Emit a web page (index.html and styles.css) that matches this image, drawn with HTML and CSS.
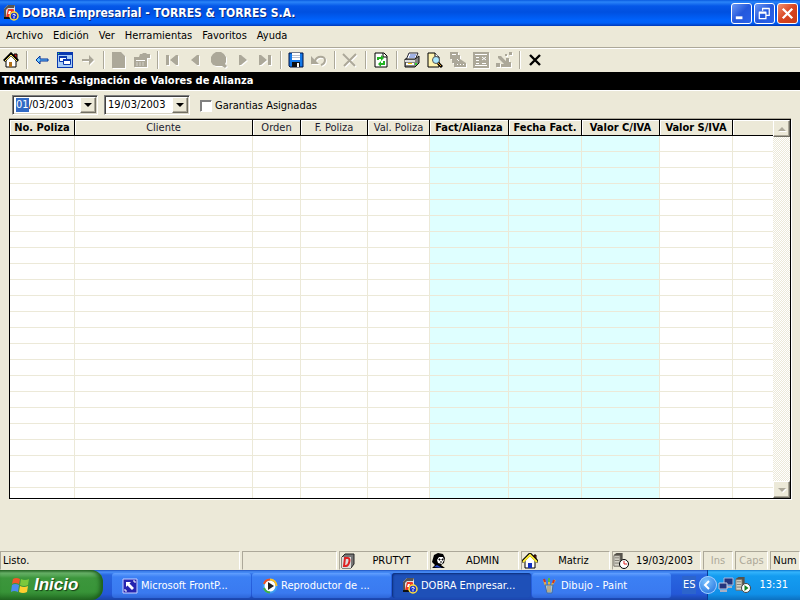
FILE: index.html
```html
<!DOCTYPE html>
<html lang="es">
<head>
<meta charset="utf-8">
<title>DOBRA Empresarial - TORRES &amp; TORRES S.A.</title>
<link rel="stylesheet" href="styles.css">
</head>
<body>
<svg class="defs" aria-hidden="true">
  <symbol id="dobra" viewBox="0 0 16 16">
    <path d="M1 4l4-4h7v9l-4 5H1z" fill="#e4e4e4"/><path d="M1 4l4-4h7l-1 3H5L3 5v8H1z" fill="#555"/><path d="M1 12h7v2H1z" fill="#111"/>
    <path d="M5 4h5c2 0 1 4 0 5l-4 3H3z" fill="#f03828"/><path d="M6 6h2L7 9H5z" fill="#fff"/>
    <circle cx="11" cy="11" r="4" fill="#1830c8" stroke="#ffe03a" stroke-width="1.500"/><path d="M9.500 10q1.500-2 3 0L11 11.500v2" fill="none" stroke="#fff"/>
  </symbol>
  <symbol id="house" viewBox="0 0 16 16">
    <path d="M11 2h3v5h-3z" fill="#c22" stroke="#000"/><path d="M3 8l5-5 5 5v7H3z" fill="#fff" stroke="#000"/>
    <path d="M1 9l7-7 7 7" fill="none" stroke="#000" stroke-width="3"/><path d="M2 9l6-6 6 6" fill="none" stroke="#ffe85a" stroke-width="1"/>
    <path d="M6 10h3v5H6z" fill="#b07018"/>
  </symbol>
  <symbol id="house-open" viewBox="0 0 16 16">
    <path d="M12 2h2v5h-2z" fill="#c22" stroke="#000"/><path d="M3 8l5-5 5 5v7H3z" fill="#fff" stroke="#000"/>
    <path d="M0 9l8-8 8 8" fill="none" stroke="#000" stroke-width="3"/><path d="M1 9l7-7 7 7" fill="none" stroke="#ffee3a" stroke-width="2"/>
    <path d="M6 10h4v5H6z" fill="#1030c0"/>
  </symbol>
  <symbol id="server" viewBox="0 0 16 16">
    <path d="M1 2l3-2h7v12l-2 3H1z" fill="#55524a"/><path d="M1 3h7v12H1z" fill="#d6d3c8" stroke="#77746a"/><path d="M2 5.500h5M2 8.500h5M2 11.500h5" stroke="#77746a"/>
  </symbol>
</svg>

<header class="titlebar">
  <svg class="icon"><use href="#dobra"/></svg>
  <h1>DOBRA Empresarial - TORRES &amp; TORRES S.A.</h1>
  <div class="caption">
    <button aria-label="Minimizar"><svg viewBox="0 0 20 20"><path d="M4 13h7v3H4z" fill="#fff"/></svg></button>
    <button aria-label="Restaurar"><svg viewBox="0 0 20 20"><path d="M8 7V5h7v7h-3M7.500 4.500h8M4.500 9.500h7v6h-7zM4 8.500h8" fill="none" stroke="#fff" stroke-width="1.300"/></svg></button>
    <button class="close" aria-label="Cerrar"><svg viewBox="0 0 20 20"><path d="M5 5l10 10M15 5L5 15" stroke="#fff" stroke-width="2.400"/></svg></button>
  </div>
</header>

<nav class="menu">
  <a href="#">Archivo</a><a href="#">Edición</a><a href="#">Ver</a><a href="#">Herramientas</a><a href="#">Favoritos</a><a href="#">Ayuda</a>
</nav>

<div class="toolbar" role="toolbar">
  <button aria-label="Inicio"><svg class="icon"><use href="#house"/></svg></button>
  <i class="sep"></i>
  <button aria-label="Atrás"><svg class="icon" viewBox="0 0 16 16"><path d="M2 8l4-4v3h8v2H6v3z" fill="#6cc8ff" stroke="#00309c"/></svg></button>
  <button aria-label="Ventanas"><svg class="icon" viewBox="0 0 16 16"><path d="M0 0h16v16H0z" fill="#0838b0"/><path d="M1 3h14v12H1z" fill="#a8ccf4"/><path d="M1 1h1v1H1z" fill="#3f3"/><path d="M2.500 4.500h7v5h-7z" fill="#fff" stroke="#0838b0"/><path d="M2 5h8" stroke="#0838b0" stroke-width="2"/><path d="M6.500 7.500h7v5h-7z" fill="#fff" stroke="#0838b0"/><path d="M6 8h8" stroke="#0838b0" stroke-width="2"/></svg></button>
  <button disabled aria-label="Adelante"><svg class="icon" viewBox="0 0 16 16"><path d="M2 7h7V3l5 5-5 5V9H2z" fill="#aca899"/></svg></button>
  <i class="sep"></i>
  <button disabled aria-label="Nuevo"><svg class="icon" viewBox="0 0 16 16"><path d="M1 0h9l4 4v12H1z" fill="#aca899"/></svg></button>
  <button disabled aria-label="Propiedades"><svg class="icon" viewBox="0 0 16 16"><path d="M6 2h2l1-1h3l1 1h3v4h-3v9H0V5h5z" fill="#aca899"/><path d="M2 8.500h9M2.500 11h1M5.500 11h1M8.500 11h1M2.500 13h1M5.500 13h1M8.500 13h1" stroke="#fff"/></svg></button>
  <i class="sep"></i>
  <button disabled aria-label="Primero"><svg class="icon" viewBox="0 0 16 16"><path d="M1 3h3v10H1zM13 3v10h-2L5 8l6-5z" fill="#aca899"/></svg></button>
  <button disabled aria-label="Anterior"><svg class="icon" viewBox="0 0 16 16"><path d="M11 3v10H9L3 8l6-5z" fill="#aca899"/></svg></button>
  <button disabled aria-label="Buscar"><svg class="icon" viewBox="0 0 16 16"><path d="M5 0h5l3 2 2 3v5l-1 2 2 2-2 2-3-2H5l-3-1-2-3V5l2-3z" fill="#aca899"/></svg></button>
  <button disabled aria-label="Siguiente"><svg class="icon" viewBox="0 0 16 16"><path d="M5 3h2l6 5-6 5H5z" fill="#aca899"/></svg></button>
  <button disabled aria-label="Último"><svg class="icon" viewBox="0 0 16 16"><path d="M2 3h2l6 5-6 5H2zM11 3h3v10h-3z" fill="#aca899"/></svg></button>
  <i class="sep"></i>
  <button aria-label="Guardar"><svg class="icon" viewBox="0 0 16 16"><path d="M1 1h14v14H2l-1-1z" fill="#1478e8" stroke="#001040"/><path d="M4 1h8v7H4z" fill="#fff"/><path d="M4 3.500h8M4 5.500h8" stroke="#b8c0d0"/><path d="M4 10h8v5H4z" fill="#111"/><path d="M9 11h2v4H9z" fill="#fff"/></svg></button>
  <button disabled aria-label="Deshacer"><svg class="icon" viewBox="0 0 16 16"><path d="M4 9c2-6 10-5 10-1 0 2-1 4-4 5" fill="none" stroke="#aca899" stroke-width="2"/><path d="M0 4v8h8z" fill="#aca899"/></svg></button>
  <i class="sep"></i>
  <button disabled aria-label="Eliminar"><svg class="icon" viewBox="0 0 16 16"><path d="M1 2l12 12M14 2L2 14" stroke="#aca899" stroke-width="2"/></svg></button>
  <i class="sep"></i>
  <button aria-label="Actualizar"><svg class="icon" viewBox="0 0 16 16"><path d="M2 1h9l3 3v11H2z" fill="#fff" stroke="#000"/><path d="M10 1v4h4" fill="#ffe" stroke="#000"/><path d="M5 8V6h3M11 9v3H8" fill="none" stroke="#22b422" stroke-width="2"/><path d="M8 3l3 3-3 3zM8 9v6l-3-3z" fill="#22b422"/></svg></button>
  <i class="sep"></i>
  <button aria-label="Imprimir"><svg class="icon" viewBox="0 0 16 16"><path d="M5 1h9l-3 7H2z" fill="#fff" stroke="#223"/><path d="M6 3h6M5 5h6" stroke="#46c"/><path d="M1 7h10l4-3v7l-4 4H1z" fill="#858585" stroke="#111"/><path d="M1 8h10v2H1z" fill="#ddd"/><path d="M2 11h8v2H2z" fill="#fff"/><path d="M4 11h4v1H4z" fill="#fc0"/><path d="M11 11h2v2h-2z" fill="#3c3"/></svg></button>
  <button aria-label="Vista previa"><svg class="icon" viewBox="0 0 16 16"><path d="M1 1h7l4 4v10H1z" fill="#fff4b0" stroke="#000"/><path d="M8 1v4h4" fill="#fff" stroke="#000"/><circle cx="9" cy="8" r="3.500" fill="#a8e8ff" stroke="#555"/><path d="M11 11l4 4" stroke="#000" stroke-width="3"/><path d="M11 11l3 3" stroke="#e8a020"/></svg></button>
  <button disabled aria-label="Exportar"><svg class="icon" viewBox="0 0 16 16"><path d="M0 0h8v3h2v4l6 4v4H4v-4H2V7H0z" fill="#aca899"/><path d="M2 2.500h4M7 7l2 2M7 12.500h1M10 12.500h1M13 12.500h1" stroke="#fff"/></svg></button>
  <button disabled aria-label="Columnas"><svg class="icon" viewBox="0 0 16 16"><path d="M0 0h16v16H0z" fill="#aca899"/><path d="M2 2.500h12M3 5.500h3M9 5l4 3M13 5L9 8M3 8.500h3M2 13.500h12M3 11.500h3M9 11.500h4" stroke="#fff"/></svg></button>
  <button disabled aria-label="Gráfico"><svg class="icon" viewBox="0 0 16 16"><path d="M0 11h4v4H0zM2 4h3l5 5V6h3v4h2v5H5v-3h3L2 6zM13 0h3v3h-3zM9 2h2v2H9z" fill="#aca899"/></svg></button>
  <i class="sep"></i>
  <button aria-label="Cerrar formulario"><svg class="icon" viewBox="0 0 16 16"><path d="M3 3l10 10M13 3L3 13" stroke="#000" stroke-width="2.400"/></svg></button>
</div>

<h2 class="form-title">TRAMITES - Asignación de Valores de Alianza</h2>

<main>
  <form class="filters">
    <div class="date">
      <input class="day selected" value="01" aria-label="Desde, día"><input class="rest" value="/03/2003" aria-label="Desde, mes y año">
      <button type="button" aria-label="Abrir calendario desde"></button>
    </div>
    <div class="date">
      <input class="day" value="19" aria-label="Hasta, día"><input class="rest" value="/03/2003" aria-label="Hasta, mes y año">
      <button type="button" aria-label="Abrir calendario hasta"></button>
    </div>
    <label class="check"><input type="checkbox">Garantias Asignadas</label>
  </form>

  <div class="grid">
    <div class="sheet">
      <table>
        <colgroup><col class="c1"><col class="c2"><col class="c3"><col class="c4"><col class="c5"><col class="c6 tint"><col class="c7 tint"><col class="c8 tint"><col class="c9"><col></colgroup>
        <thead><tr><th class="key">No. Poliza</th><th>Cliente</th><th>Orden</th><th>F. Poliza</th><th>Val. Poliza</th><th class="key">Fact/Alianza</th><th class="key">Fecha Fact.</th><th class="key">Valor C/IVA</th><th class="key">Valor S/IVA</th><th></th></tr></thead>
        <tbody id="rows"></tbody>
      </table>
    </div>
    <div class="scroll">
      <button class="up" aria-label="Subir"></button>
      <button class="down" aria-label="Bajar"></button>
    </div>
  </div>
</main>

<footer class="status">
  <span class="message">Listo.</span>
  <span class="blank"></span>
  <span class="info"><svg class="icon" viewBox="0 0 16 16"><path d="M2 4l3-3h9v10l-3 4H2z" fill="#777" stroke="#222"/><path d="M2 4h9v11H2z" fill="#ddd"/><path d="M5 5h3c3 0 1 8-2 8H4z" fill="none" stroke="#d22" stroke-width="2"/></svg><b>PRUTYT</b></span>
  <span class="info"><svg class="icon" viewBox="0 0 16 16"><path d="M3 2l4-2 5 1 2 4-1 5-3 2 4 3H1l3-3-3-3z" fill="#000"/><path d="M8 4h4l1 3-2 4-4-1-1-3z" fill="#fff"/><path d="M8 6h1v1H8zM11 6h1v1h-1zM9 9h2" fill="#000" stroke="#000"/><path d="M3 14l3-2 5 3z" fill="#2848c8"/></svg><b>ADMIN</b></span>
  <span class="info"><svg class="icon"><use href="#house-open"/></svg><b>Matriz</b></span>
  <span class="info"><svg class="icon" viewBox="0 0 16 16"><use href="#server" width="14" height="14"/><circle cx="11" cy="11" r="4.500" fill="#fff" stroke="#000"/><path d="M11 8v3h3" fill="none" stroke="#d22"/></svg><b>19/03/2003</b></span>
  <span class="key-state off ins">Ins</span>
  <span class="key-state off caps">Caps</span>
  <span class="key-state num">Num</span>
</footer>

<div class="taskbar">
  <button class="start"><svg viewBox="0 0 20 20"><path d="M3 4q3-2 7 0L9 9q-4-2-7 0z" fill="#f0562a"/><path d="M11 4q4 2 8 0l-1 6q-4 2-8 0z" fill="#7cc83c"/><path d="M2 10q3-2 7 0l-1 7q-4-2-7 0z" fill="#4c8cf0"/><path d="M10 11q4 2 8 0l-1 6q-4 2-8 0z" fill="#ffcf30"/></svg>Inicio</button>
  <div class="tasks">
    <button><svg class="icon" viewBox="0 0 16 16"><path d="M1 1h14v14H1z" fill="#2424b0" stroke="#c8d0ff"/><path d="M4 4h5L7.500 5.500 12 10l-2 2-4.500-4.500L4 9z" fill="#fff"/><path d="M11 3h2v2M3 11v2h2" stroke="#fff" fill="none"/></svg>Microsoft FrontP...</button>
    <button><svg class="icon" viewBox="0 0 16 16"><circle cx="8" cy="8" r="6.500" fill="#fff" stroke="#3c9cf0" stroke-width="2"/><path d="M2 6a6.500 6.500 0 0 1 6-4.500" stroke="#f05020" stroke-width="2" fill="none"/><path d="M8 1.500A6.500 6.500 0 0 1 14.500 8" stroke="#ffc020" stroke-width="2" fill="none"/><path d="M2 10a6.500 6.500 0 0 0 6 4.500" stroke="#40b040" stroke-width="2" fill="none"/><path d="M6 4l6 4-6 4z" fill="#222"/></svg>Reproductor de ...</button>
    <button class="active"><svg class="icon"><use href="#dobra"/></svg>DOBRA Empresar...</button>
    <button><svg class="icon" viewBox="0 0 16 16"><path d="M4 8L2 2M7 8V1M9 8l4-6" stroke-width="2" stroke="#e8b040"/><path d="M2 1l1 3M12 2l-1 3" stroke="#d03020" stroke-width="2"/><path d="M7 0v4" stroke="#50b848" stroke-width="2"/><path d="M3 7h8l-1 8H5z" fill="#9cc8e8" stroke="#4a6c98"/><path d="M6 8v6M8 8v6" stroke="#d09030"/></svg>Dibujo - Paint</button>
  </div>
  <span class="lang">ES</span>
  <div class="tray">
    <button class="expand" aria-label="Mostrar iconos ocultos"><svg viewBox="0 0 18 18"><path d="M10 5L6 9l4 4" fill="none" stroke="#fff" stroke-width="2"/></svg></button>
    <svg class="icon" viewBox="0 0 16 16"><path d="M6 1h9v7H6z" fill="#23347c" stroke="#a8b8dc"/><path d="M9 9h5v2H9z" fill="#a8b0c4"/><path d="M1 6h8v6H1z" fill="#23347c" stroke="#c4cce0"/><path d="M2 13h7v2H2z" fill="#a8b0c4"/></svg>
    <svg class="icon" viewBox="0 0 16 16"><use href="#server" width="14" height="14"/><circle cx="11" cy="11" r="4.500" fill="#fff" stroke="#444"/><path d="M9.500 8l4 3-4 3z" fill="#108020"/></svg>
    <time>13:31</time>
  </div>
</div>
<script src="rows.js"></script>
</body>
</html>
```
FILE: styles.css
```css
* { box-sizing: border-box; }
html, body { height: 100%; }
body {
  margin: 0;
  display: flex;
  flex-direction: column;
  overflow: hidden;
  background: #ece9d8;
  color: #000;
  font: 11px/14px "DejaVu Sans Condensed", "DejaVu Sans", sans-serif;
}
button, input { font: inherit; color: inherit; margin: 0; padding: 0; border: 0; background: none; }
svg { display: block; flex: none; }
.defs { position: absolute; width: 0; height: 0; }
.icon { width: 16px; height: 16px; }

.titlebar {
  flex: none;
  display: flex;
  align-items: center;
  gap: 3px;
  height: 26px;
  padding: 0 2px 0 3px;
  background: linear-gradient(#0a5be0 0, #2a84f8 2px, #0558e8 6px, #0050e0 12px, #0062fc 20px, #0060f8 23px, #0038b8 26px);
}
.titlebar h1 {
  flex: 1;
  margin: 0;
  color: #fff;
  font-size: 12px;
  line-height: 18px;
  text-shadow: 1px 1px 0 #0a2a80;
}
.caption { display: flex; gap: 2px; }
.caption button {
  width: 21px;
  height: 21px;
  border: 1px solid #fff;
  border-radius: 3px;
  background: linear-gradient(135deg, #6c98f4, #2458dc 50%, #2a62ea);
}
.caption .close { background: linear-gradient(135deg, #f09070, #d84420 50%, #c83c18); }

.menu {
  flex: none;
  display: flex;
  gap: 10px;
  height: 21px;
  padding: 3px 6px 0;
}
.menu a { color: #000; text-decoration: none; }

.toolbar {
  flex: none;
  display: flex;
  align-items: center;
  height: 25px;
  border-top: 1px solid #aca899;
  box-shadow: inset 0 1px #fff;
}
.toolbar button { width: 23px; height: 22px; display: flex; align-items: center; padding-left: 3px; }
.toolbar button:disabled svg { filter: drop-shadow(1px 1px 0 #fff); }
.sep { width: 2px; height: 18px; margin: 0 3px; border-left: 1px solid #aca899; border-right: 1px solid #fff; }

.form-title {
  flex: none;
  margin: 0;
  height: 18px;
  padding: 0 2px;
  background: #000;
  color: #fff;
  font-size: 11px;
  line-height: 18px;
}

main { flex: 1; min-height: 0; display: flex; flex-direction: column; padding: 4px 9px 52px; border-top: 1px solid #fff; }
.filters { display: flex; align-items: center; gap: 6px; padding: 0 3px; margin-bottom: 4px; }
.date {
  display: flex;
  align-items: center;
  width: 86px;
  height: 20px;
  padding: 0 1px 0 3px;
  background: #fff;
  border: 1px solid;
  border-color: #808080 #fff #fff #808080;
  box-shadow: inset 1px 1px #404040, inset -1px -1px #d8d4c4;
}
.date input { height: 14px; }
.day { width: 13px; }
.rest { flex: 1; min-width: 0; }
.selected { background: #316ac5; color: #fff; }
.date button, .scroll button {
  display: flex;
  align-items: center;
  justify-content: center;
  width: 16px;
  height: 16px;
  background: #ece9d8;
  border: 1px solid;
  border-color: #fff #716f64 #716f64 #fff;
  box-shadow: inset -1px -1px #aca899;
}
.date button::after { content: ""; border: 4px solid transparent; border-top-color: #000; border-bottom: 0; }
.check { display: flex; align-items: center; gap: 3px; margin-left: 4px; padding-top: 1px; }
.check input {
  appearance: none;
  width: 12px;
  height: 12px;
  background: #fff;
  border: 1px solid;
  border-color: #808080 #fff #fff #808080;
  box-shadow: inset 1px 1px #808080;
}

.grid { flex: 1; min-height: 0; display: flex; border: 1px solid #000; box-shadow: 0 -1px #aca899, 1px 1px #fff; background: #fff; }
.sheet { flex: 1; min-width: 0; overflow: hidden; }
table { width: 100%; table-layout: fixed; border-collapse: separate; border-spacing: 0; }
th, td { height: 16px; padding: 0; }
th {
  overflow: hidden;
  white-space: nowrap;
  line-height: 14px;
  font-weight: normal;
  text-align: center;
  color: #1c1c30;
  background: #ece9d8;
  border-right: 1px solid #000;
  border-bottom: 1px solid #000;
  box-shadow: inset 1px 1px #fff;
}
th:last-child, td:last-child { border-right: 0; }
th.key { font-weight: bold; color: #000; }
td { border-right: 1px solid #ece9d8; border-bottom: 1px solid #ece9d8; }
.c1 { width: 65px; }
.c2 { width: 178px; }
.c3 { width: 48px; }
.c4 { width: 67px; }
.c5 { width: 62px; }
.c6 { width: 79px; }
.c7 { width: 73px; }
.c8 { width: 78px; }
.c9 { width: 73px; }
.tint { background: #dfffff; }
.scroll {
  display: flex;
  flex-direction: column;
  justify-content: space-between;
  background: repeating-conic-gradient(#fff 0 25%, #ece9d8 0 50%) 0 0 / 2px 2px;
}
.scroll button { width: 17px; height: 17px; }
.scroll button::after { content: ""; border: 4px solid transparent; filter: drop-shadow(1px 1px 0 #fff); }
.scroll .up::after { border-bottom-color: #aca899; border-top: 0; }
.scroll .down::after { border-top-color: #aca899; border-bottom: 0; }

.status { flex: none; display: flex; gap: 2px; height: 19px; }
.status > span {
  display: flex;
  align-items: center;
  border: 1px solid;
  border-color: #aca899 #fff #ece9d8 #aca899;
}
.message { flex: 1; padding-left: 2px; }
.blank { width: 95px; }
.info { width: 89px; }
.info b { flex: 1; font-weight: normal; text-align: center; }
.key-state { justify-content: center; }
.status .off { color: #aca899; }
.ins, .num { width: 30px; }
.caps { width: 33px; }

.taskbar {
  flex: none;
  display: flex;
  align-items: stretch;
  height: 30px;
  color: #fff;
  background: linear-gradient(#1c50c0 0, #4a90f8 2px, #2866e0 5px, #2458d8 24px, #1a44a8);
}
.start {
  display: flex;
  align-items: center;
  gap: 4px;
  width: 103px;
  padding-left: 10px;
  border-radius: 0 12px 12px 0;
  background: linear-gradient(#2c6c2c 0, #6cb46c 3px, #3c963c 8px, #389438 22px, #246c24);
  box-shadow: inset -3px 0 4px #1c5c1c;
  font: italic bold 17px/24px "Liberation Sans", sans-serif;
  text-shadow: 1px 1px 1px #143c14;
}
.start svg { width: 20px; height: 20px; }
.tasks { flex: 1; min-width: 0; display: flex; gap: 1px; padding: 3px 0 2px 9px; }
.tasks button {
  flex: 0 1 139px;
  min-width: 0;
  display: flex;
  align-items: center;
  gap: 3px;
  padding-left: 10px;
  overflow: hidden;
  white-space: nowrap;
  border-radius: 3px;
  background: linear-gradient(#62a0ff 0, #3c80f4 4px, #3a7af0 20px, #2e66d8);
}
.tasks .active { background: #1e50b8; box-shadow: inset 1px 1px 2px #0c2c78; }
.lang { align-self: center; padding: 2px 1px; margin-right: 11px; background: #2c64cc; }
.tray {
  display: flex;
  align-items: center;
  gap: 1px;
  padding-right: 12px;
  background: linear-gradient(#0c78d0 0, #34b4fc 2px, #149cf0 6px, #1090e8 24px, #0c70c0);
  border-left: 1px solid #0a3c98;
}
.expand { width: 18px; height: 18px; margin-left: -9px; border-radius: 50%; background: radial-gradient(circle at 40% 30%, #7cc4ff, #1464d8); box-shadow: 0 0 0 1px #a0d0ff inset; }
.tray time { margin-left: 7px; }
```
FILE: rows.js
```js
const body = document.getElementById("rows");
const columns = document.querySelectorAll("thead th").length;
for (let r = 0; r < 60; r++) {
  const row = body.insertRow();
  for (let c = 0; c < columns; c++) row.insertCell();
}
```
